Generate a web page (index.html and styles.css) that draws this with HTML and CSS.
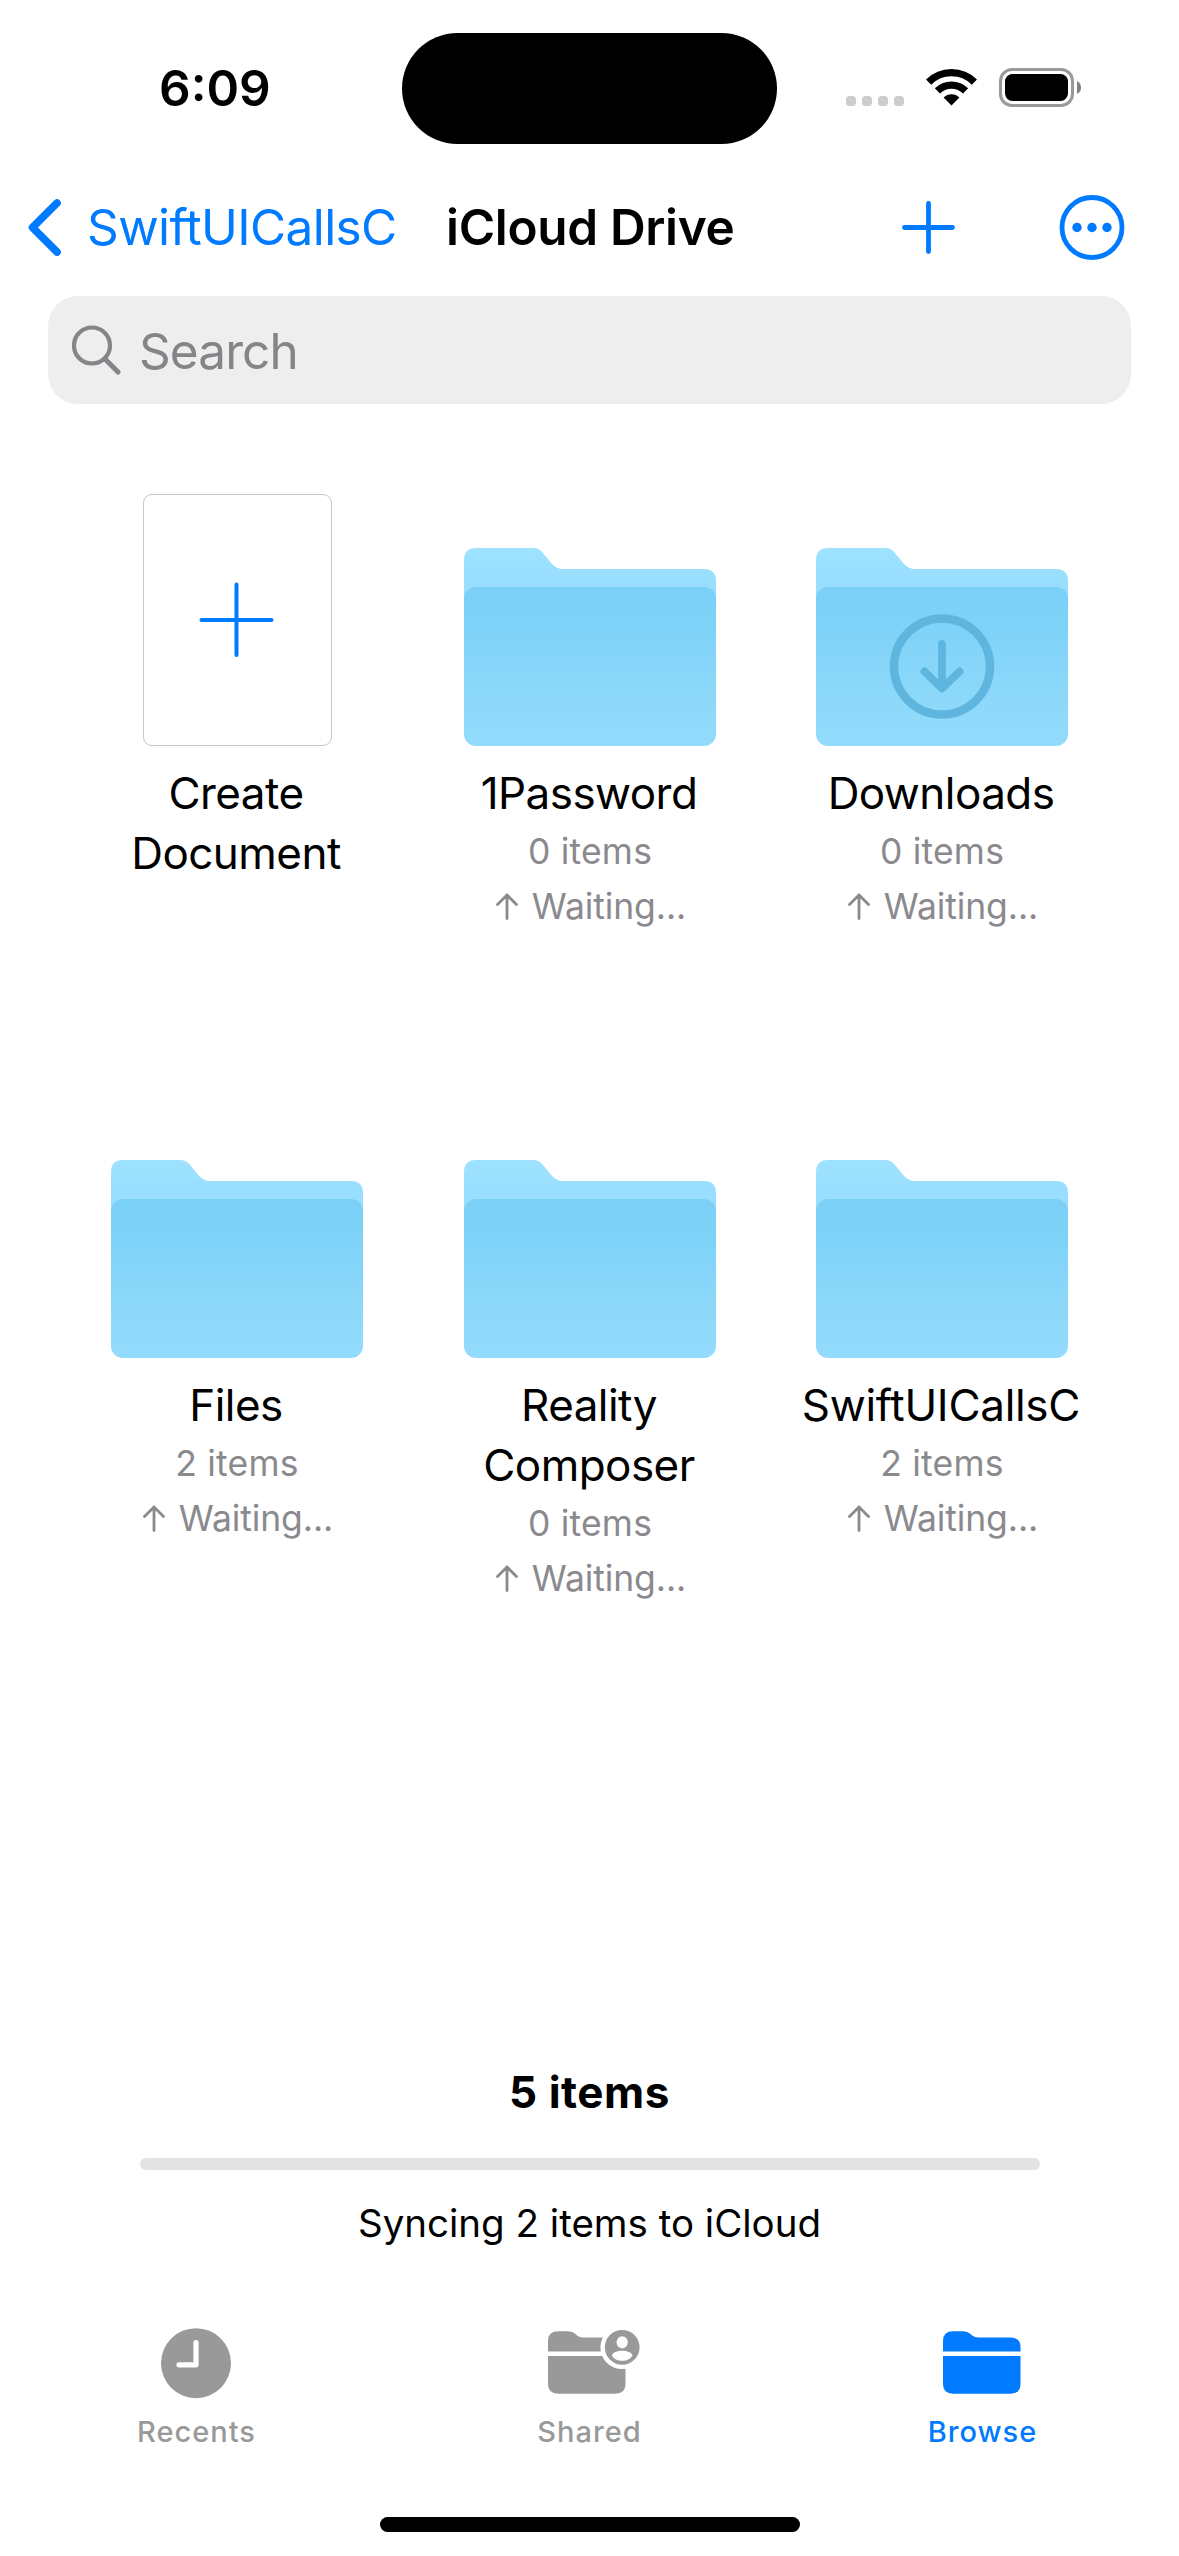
FILE: index.html
```html
<!DOCTYPE html>
<html lang="en">
<head>
<meta charset="utf-8">
<title>iCloud Drive</title>
<link rel="stylesheet" href="styles.css">
</head>
<body>
<svg class="defs" width="0" height="0" aria-hidden="true">
  <defs>
    <linearGradient id="folder-back" x1="0" y1="0" x2="0" y2="1">
      <stop offset="0" stop-color="#9de2ff"/>
      <stop offset="0.3" stop-color="#99defe"/>
    </linearGradient>
    <linearGradient id="folder-front" x1="0" y1="0" x2="0" y2="1">
      <stop offset="0" stop-color="#7ad0f7"/>
      <stop offset="0.3" stop-color="#80d3f8"/>
      <stop offset="0.75" stop-color="#8ed9fa"/>
      <stop offset="1" stop-color="#93dbfc"/>
    </linearGradient>
    <symbol id="folder" viewBox="0 0 252 198">
      <path fill="url(#folder-back)" d="M12 0H69Q75 0 79 5L88 16Q93 21 99 21H240Q252 21 252 33V100H0V12Q0 0 12 0Z"/>
      <rect fill="url(#folder-front)" y="39" width="252" height="159" rx="12"/>
    </symbol>
    <symbol id="arrow-up" viewBox="0 0 22 27">
      <path d="M11 25.5V2M1.5 11.5L11 2L20.5 11.5" fill="none" stroke="currentColor" stroke-width="2.8" stroke-linecap="round" stroke-linejoin="round"/>
    </symbol>
  </defs>
</svg>

<header class="status">
  <div class="status-time">6:09</div>
  <div class="island"></div>
  <div class="status-icons">
    <div class="cell-dots"><i></i><i></i><i></i><i></i></div>
    <svg class="wifi" width="51" height="38" viewBox="0 0 51 38">
      <g fill="none" stroke="#000" stroke-width="7.3">
        <path d="M2.6 14.1A32.4 32.4 0 0 1 48.4 14.1"/>
        <path d="M11.4 22.9A20 20 0 0 1 39.6 22.9"/>
      </g>
      <path d="M25.5 37.6L17.6 29.5A11 11 0 0 1 33.4 29.5Z"/>
    </svg>
    <svg class="battery" width="83" height="39" viewBox="0 0 83 39">
      <rect x="1.5" y="1.5" width="72" height="36" rx="11.5" fill="none" stroke="#999" stroke-width="3"/>
      <rect x="6" y="6" width="63" height="27" rx="7.5"/>
      <path d="M78 13Q82 15 82 19.5T78 26Z" fill="#808080"/>
    </svg>
  </div>
</header>

<nav class="navbar">
  <a class="back">
    <svg width="33" height="57" viewBox="0 0 33 57"><path d="M29 4L4.5 28.5L29 53" fill="none" stroke="#007aff" stroke-width="7.6" stroke-linecap="round" stroke-linejoin="round"/></svg>
    <span>SwiftUICallsC</span>
  </a>
  <h1 class="title">iCloud Drive</h1>
  <div class="actions">
    <svg width="53" height="53" viewBox="0 0 53 53"><path d="M26.500 2.500V50.500M2.500 26.500H50.500" fill="none" stroke="#007aff" stroke-width="4.800" stroke-linecap="round"/></svg>
    <svg width="66" height="66" viewBox="0 0 66 66"><circle cx="33" cy="33.500" r="30" fill="none" stroke="#007aff" stroke-width="4.800"/><g fill="#007aff"><circle cx="18" cy="33.500" r="4.700"/><circle cx="33" cy="33.500" r="4.700"/><circle cx="48" cy="33.500" r="4.700"/></g></svg>
  </div>
</nav>

<div class="search">
  <svg width="50" height="50" viewBox="0 0 50 50" fill="none" stroke="#858589"><circle cx="20" cy="20.500" r="18" stroke-width="4.200"/><path d="M33 34L46 47" stroke-width="5" stroke-linecap="round"/></svg>
  <span>Search</span>
</div>

<main class="grid">
  <section class="item">
    <div class="art"><div class="new-doc"><svg width="76" height="76" viewBox="0 0 76 76"><path d="M37.500 2.500V73M2.500 38H72.500" fill="none" stroke="#007aff" stroke-width="4" stroke-linecap="round"/></svg></div></div>
    <div class="name">Create<br>Document</div>
  </section>
  <section class="item">
    <div class="art"><svg class="folder"><use href="#folder"/></svg></div>
    <div class="name">1Password</div>
    <div class="meta">0 items</div>
    <div class="meta wait"><svg><use href="#arrow-up"/></svg>Waiting...</div>
  </section>
  <section class="item">
    <div class="art"><svg class="folder" viewBox="0 0 252 198"><use href="#folder"/><g fill="none" stroke="#5eb6de"><circle cx="126" cy="118.500" r="48" stroke-width="8.400"/><path d="M126 96V140M108.500 123.500L126 140.500L143.500 123.500" stroke-width="7.800" stroke-linecap="round" stroke-linejoin="round"/></g></svg></div>
    <div class="name">Downloads</div>
    <div class="meta">0 items</div>
    <div class="meta wait"><svg><use href="#arrow-up"/></svg>Waiting...</div>
  </section>
  <section class="item">
    <div class="art"><svg class="folder"><use href="#folder"/></svg></div>
    <div class="name">Files</div>
    <div class="meta">2 items</div>
    <div class="meta wait"><svg><use href="#arrow-up"/></svg>Waiting...</div>
  </section>
  <section class="item">
    <div class="art"><svg class="folder"><use href="#folder"/></svg></div>
    <div class="name">Reality<br>Composer</div>
    <div class="meta">0 items</div>
    <div class="meta wait"><svg><use href="#arrow-up"/></svg>Waiting...</div>
  </section>
  <section class="item">
    <div class="art"><svg class="folder"><use href="#folder"/></svg></div>
    <div class="name wide">SwiftUICallsC</div>
    <div class="meta">2 items</div>
    <div class="meta wait"><svg><use href="#arrow-up"/></svg>Waiting...</div>
  </section>
</main>

<section class="summary">
  <div class="count">5 items</div>
  <div class="progress"></div>
  <div class="sync">Syncing 2 items to iCloud</div>
</section>

<footer class="tabs">
  <a class="tab">
    <svg width="110" height="72" viewBox="0 0 110 72"><circle cx="54" cy="35.200" r="35" fill="#999"/><path d="M54 14.700V36.800H37" fill="none" stroke="#fff" stroke-width="5.200" stroke-linecap="round" stroke-linejoin="round"/></svg>
    <span>Recents</span>
  </a>
  <a class="tab">
    <svg width="110" height="72" viewBox="0 0 110 72">
      <g fill="#999">
        <path d="M13 23.500V13Q13 3.200 23 3.200H33.500Q37.500 3.200 40.500 6L42.500 7.700Q44.500 9.500 48.500 9.500H80.500Q90.500 9.500 90.500 19.500V23.500Z"/>
        <path d="M13 28H90.500V56Q90.500 65.700 80.500 65.700H23Q13 65.700 13 56Z"/>
      </g>
      <circle cx="87.200" cy="19.300" r="21.800" fill="#fff"/>
      <circle cx="87.200" cy="19.300" r="17.400" fill="#999"/>
      <g fill="#fff"><ellipse cx="87.200" cy="14.300" rx="5.600" ry="6.100"/><path d="M77 27.400C78.500 21.300 95.900 21.300 97.400 27.400C94 34.600 80.400 34.600 77 27.400Z"/></g>
    </svg>
    <span>Shared</span>
  </a>
  <a class="tab active">
    <svg width="110" height="72" viewBox="0 0 110 72">
      <g fill="#007aff">
        <path d="M15 23.500V13Q15 3.200 25 3.200H35.500Q39.500 3.200 42.500 6L44.500 7.700Q46.500 9.500 50.500 9.500H82.500Q92.500 9.500 92.500 19.500V23.500Z"/>
        <path d="M15 28H92.500V56Q92.500 65.700 82.500 65.700H25Q15 65.700 15 56Z"/>
      </g>
    </svg>
    <span>Browse</span>
  </a>
</footer>
<div class="home"></div>
</body>
</html>
```
FILE: styles.css
```css
* { box-sizing: border-box; }
body {
  margin: 0;
  width: 1179px;
  height: 2556px;
  display: flex;
  flex-direction: column;
  overflow: hidden;
  background: #fff;
  color: #000;
  font-family: Inter, "Liberation Sans", sans-serif;
}
svg { display: block; flex: none; }
.defs { height: 0; }

.status {
  display: grid;
  grid-template-columns: 402px 375px 402px;
  padding-top: 33px;
  height: 177px;
  flex: none;
}
.status-time {
  height: 111px;
  line-height: 111px;
  padding-left: 159px;
  font-size: 49.5px;
  font-weight: 600;
}
.island { height: 111px; border-radius: 56px; background: #000; }
.status-icons { display: flex; padding: 35px 0 0 69px; height: 111px; }
.cell-dots { display: flex; gap: 6px; padding-top: 28px; margin-right: 22px; }
.cell-dots i { width: 10px; height: 10px; border-radius: 3.5px; background: #ccc; }
.wifi { margin-right: 22px; }

.navbar {
  display: grid;
  grid-template-columns: 400px 1fr auto;
  align-items: center;
  height: 100px;
  padding: 0 54px 0 28px;
  font-size: 49.5px;
  line-height: 60px;
  flex: none;
}
.back {
  display: flex;
  align-items: center;
  gap: 26px;
  color: #007aff;
  letter-spacing: -0.6px;
  white-space: nowrap;
}
.title {
  margin: 0 0 0 18px;
  font-size: 49.5px;
  font-weight: 600;
  letter-spacing: -0.33px;
  white-space: nowrap;
}
.actions { display: flex; align-items: center; gap: 104px; }

.search {
  display: flex;
  align-items: center;
  gap: 17px;
  height: 108px;
  margin: 19px 48px 0;
  padding-left: 24px;
  border-radius: 30px;
  background: #eee;
  color: #858589;
  font-size: 49.5px;
  letter-spacing: -0.9px;
  flex: none;
}
.search span { padding-top: 1px; }

.grid {
  display: grid;
  grid-template-columns: 352px 354px 350px;
  grid-auto-rows: 612px;
  margin: 90px 60px 0 61px;
  flex: none;
}
.item { text-align: center; }
.art {
  height: 252px;
  margin-bottom: 17px;
  display: flex;
  align-items: flex-end;
  justify-content: center;
}
.folder { width: 252px; height: 198px; }
.new-doc {
  width: 189px;
  height: 252px;
  border: 1px solid #c6c6c8;
  border-radius: 9px;
  display: flex;
  align-items: center;
  justify-content: center;
}
.name {
  margin-bottom: 1px;
  padding-right: 2px;
  font-size: 44px;
  line-height: 60px;
  letter-spacing: -0.55px;
}
.wide { letter-spacing: -0.3px; }
.meta {
  font-size: 35.5px;
  line-height: 55px;
  color: #8a8a8e;
  letter-spacing: 0.2px;
}
.wait {
  display: flex;
  justify-content: center;
  align-items: center;
  gap: 14px;
  padding-left: 2px;
  letter-spacing: -0.1px;
}
.wait svg { width: 22px; height: 27px; }

.summary {
  margin-top: auto;
  display: flex;
  flex-direction: column;
  align-items: center;
}
.count { font-size: 44px; line-height: 60px; font-weight: 700; letter-spacing: 0.55px; }
.progress { width: 900px; height: 12px; margin: 36px 0 27px; border-radius: 6px; background: #e3e3e4; }
.sync { font-size: 38.5px; line-height: 52px; }

.tabs { display: grid; grid-template-columns: repeat(3, 1fr); margin-top: 79px; }
.tab {
  display: flex;
  flex-direction: column;
  align-items: center;
  gap: 14px;
  color: #999;
  font-size: 29px;
  line-height: 36px;
  font-weight: 500;
  letter-spacing: 1px;
}
.active { color: #007aff; }

.home {
  width: 420px;
  height: 15px;
  margin: 67px auto 24px;
  border-radius: 8px;
  background: #000;
  flex: none;
}
```
